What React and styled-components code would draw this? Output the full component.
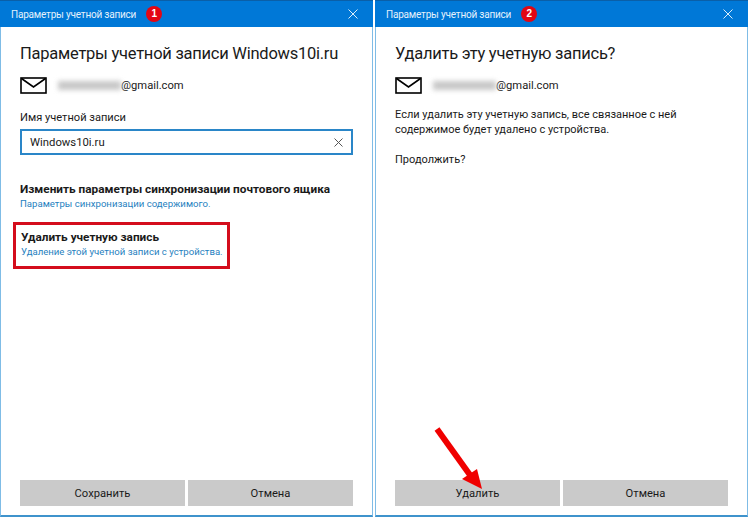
import styled, { createGlobalStyle } from "styled-components";

const GlobalStyle = createGlobalStyle`
  html, body {
    margin: 0;
    padding: 0;
    background: #fff;
  }
  * {
    box-sizing: border-box;
  }
`;

const Page = styled.div`
  width: 749px;
  height: 517px;
  display: flex;
  gap: 2px;
  font-family: Roboto, "Open Sans", sans-serif;
  color: #1a1a1a;
  overflow: hidden;
`;

const Dialog = styled.div`
  position: relative;
  flex: 0 0 373px;
  min-width: 0;
  display: flex;
  flex-direction: column;
  height: 517px;
  border-left: 1px solid #7fbce6;
  border-right: 1px solid #7fbce6;
  border-bottom: 2px solid #3f93cc;
  background: #fff;
`;

const TitleBar = styled.div`
  flex: 0 0 27px;
  margin: 0 -1px;
  display: flex;
  align-items: center;
  padding: 0 15px 0 11px;
  background: #0078d7;
  border-top: 1px solid #0a5fa8;
  color: #e4f1fb;
  font-size: 10px;
  letter-spacing: -0.2px;
`;

const Badge = styled.span`
  width: 16px;
  height: 16px;
  margin-left: 10px;
  border-radius: 50%;
  background: #e30613;
  color: #fff;
  font-family: "Liberation Sans", sans-serif;
  font-size: 10px;
  font-weight: 700;
  letter-spacing: 0;
  line-height: 16px;
  text-align: center;
`;

const CloseButton = styled.svg`
  margin-left: auto;
  width: 10px;
  height: 10px;
  stroke: #dceefa;
  stroke-width: 1;
  fill: none;
`;

const Body = styled.div`
  flex: 1;
  display: flex;
  flex-direction: column;
  padding: 15px 19px 0 19px;
`;

const Heading = styled.h1`
  margin: 0;
  font-size: 16.5px;
  font-weight: 400;
  line-height: 24px;
  letter-spacing: -0.25px;
  white-space: nowrap;
`;

const AccountRow = styled.div`
  display: flex;
  align-items: center;
  height: 20px;
  margin-top: 9px;
  font-size: 11.2px;
`;

const MailIcon = styled.svg`
  width: 27px;
  height: 17px;
  fill: none;
  stroke: #000;
  stroke-width: 1.6;
`;

const BlurredName = styled.span`
  width: 63px;
  height: 9px;
  margin-left: 11px;
  background: #c8c8c8;
  filter: blur(2.5px);
`;

const Label = styled.div`
  margin-top: 15px;
  font-size: 11.1px;
  line-height: 16px;
`;

const TextBox = styled.div`
  display: flex;
  align-items: center;
  justify-content: space-between;
  height: 26px;
  margin-top: 3px;
  width: 333px;
  padding: 0 8px 0 8px;
  border: 2px solid #2a86c8;
  font-size: 11.3px;
`;

const ClearIcon = styled.svg`
  width: 9px;
  height: 9px;
  stroke: #555;
  stroke-width: 1;
  fill: none;
`;

const OptionTitle = styled.div`
  font-size: 11.8px;
  font-weight: 700;
  line-height: 15px;
  white-space: nowrap;
`;

const OptionLink = styled.div`
  color: #1f7fc0;
  font-size: 9.6px;
  line-height: 14px;
  white-space: nowrap;
`;

const Option = styled.div`
  margin-top: 27px;
`;

const Highlight = styled.div`
  align-self: flex-start;
  width: 217px;
  height: 47px;
  margin: 11px 0 0 -7px;
  padding: 5px 0 0 5px;
  border: 3px solid #d40d1c;
`;

const Paragraph = styled.p`
  margin: 12px 0 0;
  font-size: 11px;
  line-height: 15px;

  & + & {
    margin-top: 15px;
  }
`;

const Footer = styled.div`
  margin-top: auto;
  display: flex;
  gap: 3px;
  padding-bottom: 9px;
`;

const Button = styled.button`
  flex: 0 0 165px;
  height: 26px;
  border: 0;
  padding: 0;
  background: #cacaca;
  color: #1a1a1a;
  font-family: inherit;
  font-size: 11.2px;
`;

const Arrow = styled.svg`
  position: absolute;
  left: 58px;
  top: 425px;
  width: 50px;
  height: 70px;
`;

const Close = () => (
  <CloseButton viewBox="0 0 10 10">
    <path d="M0.5 0.5 L9.5 9.5 M9.5 0.5 L0.5 9.5" />
  </CloseButton>
);

const Mail = () => (
  <MailIcon viewBox="0 0 27 17">
    <rect x="1" y="1" width="25" height="15" />
    <path d="M1.5 1.5 L13.5 10 L25.5 1.5" />
  </MailIcon>
);

const Window = ({ number, children, footer, arrow }) => (
  <Dialog>
    <TitleBar>
      Параметры учетной записи
      <Badge>{number}</Badge>
      <Close />
    </TitleBar>
    <Body>
      {children}
      <Footer>
        {footer.map((text) => (
          <Button key={text}>{text}</Button>
        ))}
      </Footer>
    </Body>
    {arrow && (
      <Arrow viewBox="0 0 50 70">
        <path d="M3 4 L36 50" stroke="#f00000" strokeWidth="6" />
        <path d="M28 54 L43 44 L48 64 Z" fill="#f00000" />
      </Arrow>
    )}
  </Dialog>
);

const Account = () => (
  <AccountRow>
    <Mail />
    <BlurredName />
    @gmail.com
  </AccountRow>
);

export default function App() {
  return (
    <Page>
      <GlobalStyle />
      <Window number="1" footer={["Сохранить", "Отмена"]}>
        <Heading>Параметры учетной записи Windows10i.ru</Heading>
        <Account />
        <Label>Имя учетной записи</Label>
        <TextBox>
          Windows10i.ru
          <ClearIcon viewBox="0 0 9 9">
            <path d="M0.5 0.5 L8.5 8.5 M8.5 0.5 L0.5 8.5" />
          </ClearIcon>
        </TextBox>
        <Option>
          <OptionTitle>Изменить параметры синхронизации почтового ящика</OptionTitle>
          <OptionLink>Параметры синхронизации содержимого.</OptionLink>
        </Option>
        <Highlight>
          <OptionTitle>Удалить учетную запись</OptionTitle>
          <OptionLink>Удаление этой учетной записи с устройства.</OptionLink>
        </Highlight>
      </Window>
      <Window number="2" footer={["Удалить", "Отмена"]} arrow>
        <Heading>Удалить эту учетную запись?</Heading>
        <Account />
        <Paragraph>
          Если удалить эту учетную запись, все связанное с ней
          <br />
          содержимое будет удалено с устройства.
        </Paragraph>
        <Paragraph>Продолжить?</Paragraph>
      </Window>
    </Page>
  );
}
